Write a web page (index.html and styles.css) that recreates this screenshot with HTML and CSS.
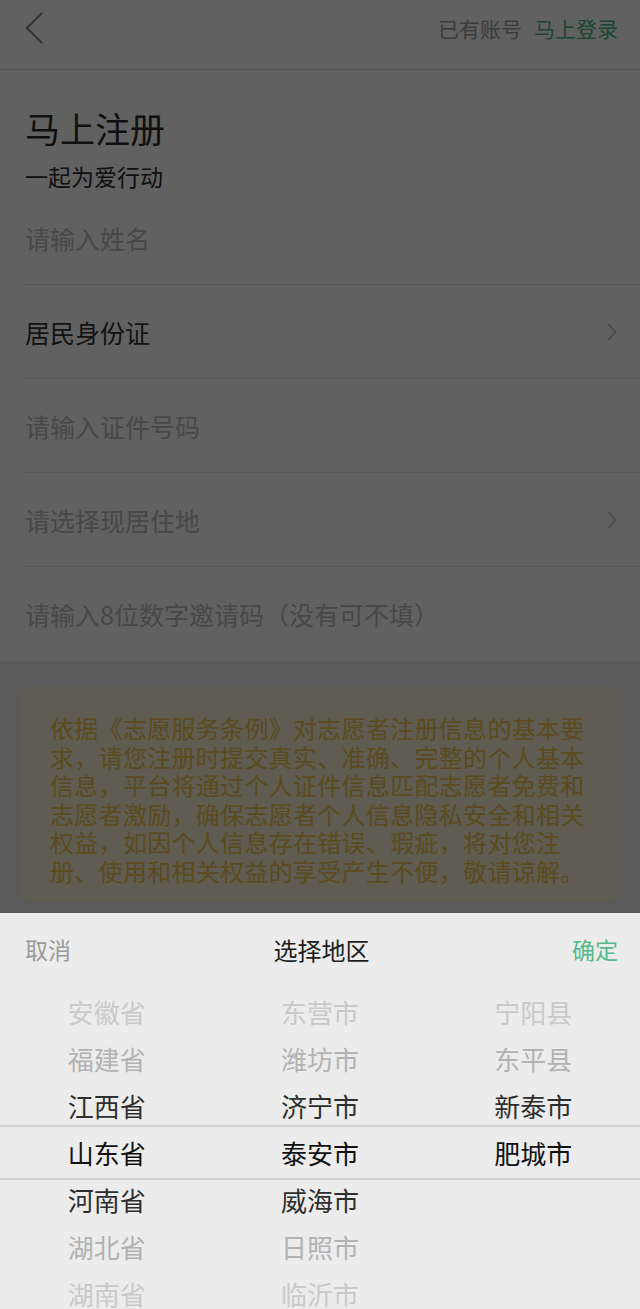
FILE: index.html
```html
<!DOCTYPE html>
<html lang="zh-CN">
<head>
<meta charset="utf-8">
<title>马上注册</title>
<link rel="stylesheet" href="styles.css">
</head>
<body>
<div class="page">
  <header class="topbar">
    <svg class="back" width="18" height="32" viewBox="0 0 18 32"><polyline points="16.5,1.5 2,16 16.5,30.5"/></svg>
    <div class="login"><span class="has">已有账号</span><span class="go">马上登录</span></div>
  </header>
  <section class="form">
    <div class="intro">
      <h1 class="title">马上注册</h1>
      <p class="slogan">一起为爱行动</p>
    </div>
    <div class="field placeholder">请输入姓名</div>
    <div class="field value">居民身份证<svg class="chev" width="10" height="18" viewBox="0 0 10 18"><polyline points="1.5,1.5 8.5,9 1.5,16.5"/></svg></div>
    <div class="field placeholder">请输入证件号码</div>
    <div class="field placeholder">请选择现居住地<svg class="chev" width="10" height="18" viewBox="0 0 10 18"><polyline points="1.5,1.5 8.5,9 1.5,16.5"/></svg></div>
    <div class="field placeholder">请输入8位数字邀请码（没有可不填）</div>
  </section>
  <div class="notice">依据《志愿服务条例》对志愿者注册信息的基本要<br>求，请您注册时提交真实、准确、完整的个人基本<br>信息，平台将通过个人证件信息匹配志愿者免费和<br>志愿者激励，确保志愿者个人信息隐私安全和相关<br>权益，如因个人信息存在错误、瑕疵，将对您注<br>册、使用和相关权益的享受产生不便，敬请谅解。</div>
</div>
<div class="mask"></div>
<div class="sheet">
  <div class="sheet-head">
    <span class="cancel">取消</span>
    <span class="sheet-title">选择地区</span>
    <span class="ok">确定</span>
  </div>
  <div class="picker">
    <div class="band"></div>
    <div class="col">
      <div class="item d3">安徽省</div>
      <div class="item d2">福建省</div>
      <div class="item d1">江西省</div>
      <div class="item sel">山东省</div>
      <div class="item d1">河南省</div>
      <div class="item d2">湖北省</div>
      <div class="item d3">湖南省</div>
    </div>
    <div class="col">
      <div class="item d3">东营市</div>
      <div class="item d2">潍坊市</div>
      <div class="item d1">济宁市</div>
      <div class="item sel">泰安市</div>
      <div class="item d1">威海市</div>
      <div class="item d2">日照市</div>
      <div class="item d3">临沂市</div>
    </div>
    <div class="col">
      <div class="item d3">宁阳县</div>
      <div class="item d2">东平县</div>
      <div class="item d1">新泰市</div>
      <div class="item sel">肥城市</div>
    </div>
  </div>
</div>
</body>
</html>
```
FILE: styles.css
```css
* { box-sizing: border-box; }
html, body {
  margin: 0;
  padding: 0;
}
body {
  width: 640px;
  height: 1309px;
  overflow: hidden;
  background: #ececec;
  font-family: "Noto Sans CJK SC", "Noto Sans", sans-serif;
  color: #333;
}
.page { width: 640px; }

.topbar {
  height: 70px;
  background: #fff;
  border-bottom: 1px solid #dcdcdc;
  display: flex;
  align-items: center;
  justify-content: space-between;
  padding: 0 22px 14px 25px;
}
.back polyline {
  fill: none;
  stroke: #8c8c8c;
  stroke-width: 2.4;
  stroke-linecap: round;
  stroke-linejoin: round;
}
.login { font-size: 21px; line-height: 30px; }
.has { color: #9c9c9c; margin-right: 12px; }
.go { color: #3fba84; }

.form { background: #fff; }
.intro { padding: 36px 25px 0; }
.title {
  margin: 0;
  font-size: 35px;
  line-height: 44px;
  font-weight: 400;
  color: #2c2c2c;
}
.slogan {
  margin: 11px 0 0;
  font-size: 23px;
  line-height: 30px;
  color: #2c2c2c;
}
.field {
  margin-left: 25px;
  padding-right: 23px;
  height: 94px;
  border-bottom: 1px solid #e4e4e4;
  display: flex;
  align-items: center;
  justify-content: space-between;
  font-size: 25px;
}
.field:last-child { border-bottom: none; }
.placeholder { color: #bcbcbc; }
.value { color: #333; }
.chev polyline {
  fill: none;
  stroke: #c4c4c4;
  stroke-width: 1.6;
  stroke-linecap: round;
  stroke-linejoin: round;
}

.notice {
  margin: 26px 23px 0 22px;
  background: #faf2d6;
  border-radius: 8px;
  padding: 27px 0 17px 28px;
  color: #f0c24e;
  font-size: 24px;
  line-height: 28.5px;
  letter-spacing: 0.3px;
  white-space: nowrap;
}

.mask {
  position: fixed;
  inset: 0;
  background: rgba(0, 0, 0, 0.62);
}

.sheet {
  position: fixed;
  left: 0;
  right: 0;
  bottom: 0;
  height: 396px;
  background: #ececec;
  overflow: hidden;
}
.sheet-head {
  height: 75px;
  display: flex;
  align-items: center;
  justify-content: space-between;
  padding: 0 22px 3px 25px;
}
.cancel { font-size: 23px; color: #9a9a9a; }
.sheet-title { font-size: 24px; color: #1e1e1e; }
.ok { font-size: 23px; color: #56b98b; }

.picker {
  position: relative;
  display: grid;
  grid-template-columns: repeat(3, 1fr);
}
.band {
  position: absolute;
  left: 0;
  right: 0;
  top: 137px;
  height: 55px;
  border-top: 2px solid #d2d2d2;
  border-bottom: 2px solid #d2d2d2;
  pointer-events: none;
}
.col {
  display: flex;
  flex-direction: column;
  align-items: center;
}
.item {
  height: 47px;
  line-height: 47px;
  font-size: 26px;
}
.sel { color: #111; }
.d1 { color: #2e2e2e; }
.d2 { color: #b2b2b2; }
.d3 { color: #c9c9c9; }
```
